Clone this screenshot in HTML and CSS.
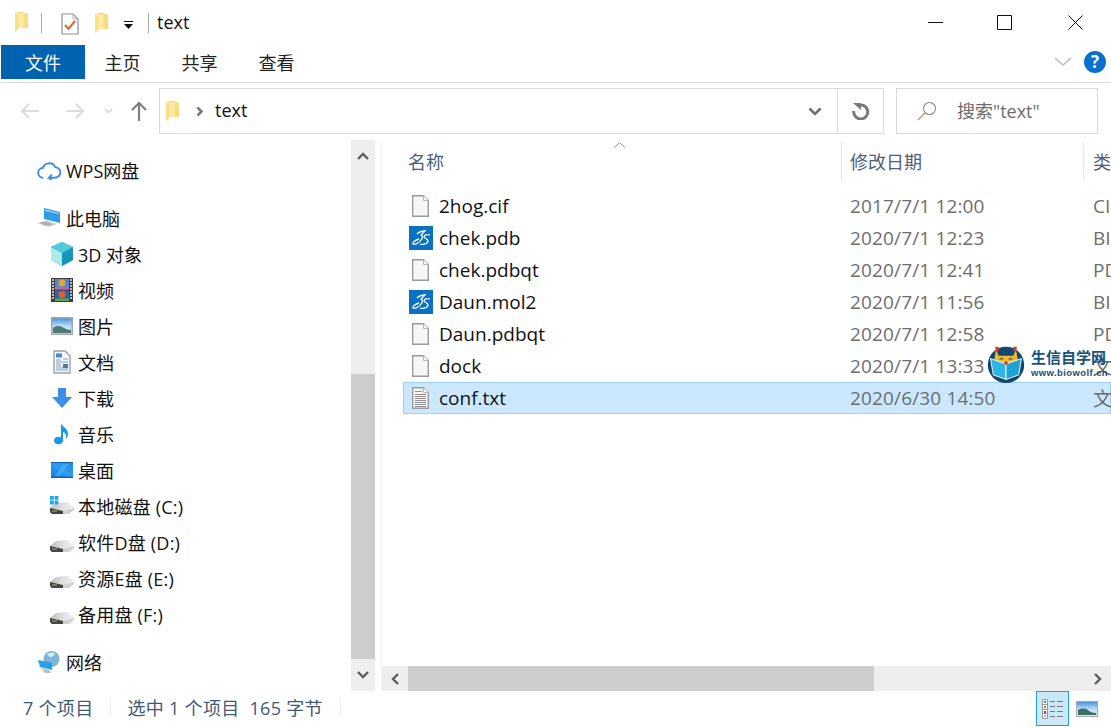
FILE: index.html
```html
<!DOCTYPE html>
<html lang="zh-CN">
<head>
<meta charset="utf-8">
<title>text</title>
<link rel="stylesheet" href="styles.css">
</head>
<body>
<svg class="defs" width="0" height="0" aria-hidden="true">
  <defs>
    <linearGradient id="fold" x1="0" x2="1" y1="0" y2="0"><stop offset="0" stop-color="#fbe08c"/><stop offset="1" stop-color="#f7d570"/></linearGradient>
    <linearGradient id="sky" x1="0" x2="0" y1="0" y2="1"><stop offset="0" stop-color="#3d8fe0"/><stop offset=".5" stop-color="#b9dcf5"/><stop offset="1" stop-color="#dfeefa"/></linearGradient>
    <linearGradient id="desk" x1="0" x2="1" y1="1" y2="0"><stop offset="0" stop-color="#1878dc"/><stop offset=".5" stop-color="#2f9cf2"/><stop offset="1" stop-color="#1b8aea"/></linearGradient>
    <linearGradient id="drivetop" x1="0" x2="1" y1="0" y2="0"><stop offset="0" stop-color="#bdbdbd"/><stop offset=".6" stop-color="#e3e3e3"/><stop offset="1" stop-color="#f0f0f0"/></linearGradient>
    <symbol id="folder" viewBox="0 0 15 22">
      <path d="M0 0h9l1 1h4v16H4L1 20 0 21z" fill="#fdeaa5"/>
      <path d="M3 0h6l1 1H3z" fill="#f5cf66"/>
      <path d="M9 1h4l1 16H9z" fill="url(#fold)"/>
      <path d="M4 3v14l-3 4-1 0V2z" fill="#fbe08c"/>
    </symbol>
    <symbol id="blank" viewBox="0 0 17 22">
      <path d="M.7.700h10.800l4.800 4.800v15.800H.7z" fill="#f6f7f8" stroke="#9b9b9b" stroke-width="1.400"/>
      <path d="M11.500.700v4.800h4.800" fill="#fff" stroke="#b5b5b5"/>
    </symbol>
    <symbol id="text" viewBox="0 0 17 22">
      <path d="M.7.700h10.800l4.800 4.800v15.800H.7z" fill="#f6f7f8" stroke="#9b9b9b" stroke-width="1.400"/>
      <path d="M11.500.700v4.800h4.800" fill="#fff" stroke="#b5b5b5"/>
      <path d="M3 4.500h7M3 7.500h11M3 9.500h11M3 11.500h11M3 13.500h11M3 15.500h11M3 17.500h11M3 19.500h11" stroke="#8f8f8f"/>
    </symbol>
    <symbol id="ds" viewBox="0 0 24 24">
      <rect width="24" height="24" fill="#0b71c1"/>
      <path d="M8 8c2-2 5-3 8-3l-4 4c2 1 2 3 0 5-2 3-6 5-8 4-1-1 2-4 6-5" fill="none" stroke="#fff" stroke-width="1.300"/>
      <path d="M21 9c-3-1-6 0-6 1.500 0 2 4 2 4 4.500 0 2.500-5 4-8 3" fill="none" stroke="#fff" stroke-width="1.300"/>
    </symbol>
    <symbol id="drive" viewBox="0 0 24 12">
      <path d="M0 6 6 1l11-1 7 5v3l-5 4H2L0 10z" fill="url(#drivetop)"/>
      <path d="M0 6l13 3v3H2l-2-2z" fill="#454545"/>
      <path d="M13 9l11-3v2l-5 4h-6z" fill="#d2d2d2"/>
      <path d="M2 9h5" stroke="#9ab88a"/>
    </symbol>
  </defs>
</svg>

<div class="window">
  <header class="titlebar">
    <svg class="tb-folder" width="14" height="21"><use href="#folder"/></svg>
    <span class="tb-sep tb-sep-a"></span>
    <svg class="tb-props" width="18" height="22" viewBox="0 0 18 22">
      <path d="M1 1h11l5 5v15H1z" fill="#fff" stroke="#8d8d8d" stroke-width="1.200"/>
      <path d="M12 1v5h5" fill="none" stroke="#b5b5b5"/>
      <path d="M4 12l3.500 4L14 8" fill="none" stroke="#e8602c" stroke-width="2"/>
    </svg>
    <svg class="tb-newfolder" width="14" height="21"><use href="#folder"/></svg>
    <svg class="tb-drop" width="9" height="9" viewBox="0 0 9 9"><path d="M0 .500h9" stroke="#111"/><path d="M0 3h9L4.500 8z" fill="#111"/></svg>
    <span class="tb-sep tb-sep-b"></span>
    <span class="tb-title">text</span>
    <div class="wincontrols">
      <svg width="15" height="15" viewBox="0 0 15 15"><path d="M0 7.500h15" stroke="#111"/></svg>
      <svg width="15" height="15" viewBox="0 0 15 15"><path d="M.500.500h14v14H.500z" fill="none" stroke="#111"/></svg>
      <svg class="wc-close" width="15" height="15" viewBox="0 0 15 15"><path d="M.500.500l14 14M14.500.500l-14 14" stroke="#111"/></svg>
    </div>
  </header>

  <nav class="ribbon">
    <span class="tab tab-file">文件</span>
    <span class="tab">主页</span>
    <span class="tab">共享</span>
    <span class="tab">查看</span>
    <div class="ribbon-right">
      <svg width="18" height="10" viewBox="0 0 18 10"><path d="M1 1l8 7 8-7" fill="none" stroke="#bcbcbc" stroke-width="1.500"/></svg>
      <span class="help">?</span>
    </div>
  </nav>

  <div class="addressrow">
    <div class="navbtns">
      <svg width="20" height="16" viewBox="0 0 20 16"><path d="M19 8H2M9 1 2 8l7 7" fill="none" stroke="#dcdcdc" stroke-width="2.200"/></svg>
      <svg width="20" height="16" viewBox="0 0 20 16"><path d="M1 8h17M11 1l7 7-7 7" fill="none" stroke="#dcdcdc" stroke-width="2.200"/></svg>
      <svg width="9" height="6" viewBox="0 0 9 6"><path d="M1 1l3.500 3.500L8 1" fill="none" stroke="#d5d5d5" stroke-width="1.500"/></svg>
      <svg width="16" height="20" viewBox="0 0 16 20"><path d="M8 20V2M1 9l7-7 7 7" fill="none" stroke="#7f7f7f" stroke-width="2.200"/></svg>
    </div>
    <div class="addressbar">
      <svg class="addr-folder" width="14" height="21"><use href="#folder"/></svg>
      <svg class="addr-chev" width="8" height="11" viewBox="0 0 8 11"><path d="M1.500 1.500 5.500 5.500 1.500 9.500" fill="none" stroke="#7a7a7a" stroke-width="2.600"/></svg>
      <span class="addr-text">text</span>
      <svg class="addr-drop" width="14" height="9" viewBox="0 0 14 9"><path d="M1.500 1.500 7 7l5.500-5.500" fill="none" stroke="#6f6f6f" stroke-width="2.600"/></svg>
      <span class="addr-refresh">
        <svg width="18" height="18" viewBox="0 0 18 18"><path d="M5 4a7 7 0 1 1-3.200 5" fill="none" stroke="#7a7a7a" stroke-width="3"/><path d="M1 1h8v7z" fill="#7a7a7a"/></svg>
      </span>
    </div>
    <div class="searchbox">
      <svg width="20" height="20" viewBox="0 0 20 20"><circle cx="12.500" cy="7.500" r="6" fill="none" stroke="#8a8a8a" stroke-width="1.100"/><path d="M8 12l-7 7" stroke="#c2906b" stroke-width="1.300"/></svg>
      <span class="search-label">搜索"text"</span>
    </div>
  </div>

  <main class="content">
    <aside class="sidebar">
      <ul class="tree">
        <li class="node top">
          <svg class="ic" width="25" height="20" viewBox="0 0 25 20"><path d="M6.500 18a5 5 0 0 1-.5-10 7 7 0 0 1 13-1 5.500 5.500 0 0 1-.5 11h-6l3-3M12.500 18l3 3" fill="none" stroke="#3f8cf0" stroke-width="2"/></svg>
          <span>WPS网盘</span>
        </li>
        <li class="node top gap">
          <svg class="ic" width="24" height="20" viewBox="0 0 24 20"><path d="M7 0l16 4v11L7 11z" fill="#2f9ce8"/><path d="M8 1.500l14 3.500v1L8 3z" fill="#a6d8f7"/><path d="M0 15l10-2 10 3-8 3z" fill="#c8ccd0"/><path d="M3 15l7-1.300M5 16l8-1.200M7 17l8-1" stroke="#8d9398" stroke-width=".7"/></svg>
          <span>此电脑</span>
        </li>
        <li class="node">
          <svg class="ic" width="24" height="24" viewBox="0 0 24 24"><path d="M12 0l11 5v13l-11 6-11-6V5z" fill="#22a6c7"/><path d="M1 5l11 6v13L1 18z" fill="#aeeaea"/><path d="M12 11l11-6v13l-11 6z" fill="#1796bc"/><path d="M12 0l11 5-11 6L1 5z" fill="#4fcbdc"/></svg>
          <span>3D 对象</span>
        </li>
        <li class="node">
          <svg class="ic" width="22" height="24" viewBox="0 0 22 24"><rect width="22" height="24" fill="#3c3c3c"/><rect x="4" y="1" width="14" height="10.500" fill="#4d87d8"/><rect x="4" y="12.500" width="14" height="10.500" fill="#2e63bb"/><circle cx="11" cy="5" r="3.500" fill="#e9a531"/><circle cx="11" cy="16.500" r="3.500" fill="#d9622b"/><rect x="4" y="9" width="14" height="2.500" fill="#cd5f9f"/><rect x="4" y="20.500" width="14" height="2.500" fill="#5ca53f"/><path d="M1 2h2M1 5h2M1 8h2M1 11h2M1 14h2M1 17h2M1 20h2M19 2h2M19 5h2M19 8h2M19 11h2M19 14h2M19 17h2M19 20h2" stroke="#e8e8e8" stroke-width="1.500"/></svg>
          <span>视频</span>
        </li>
        <li class="node">
          <svg class="ic" width="22" height="18" viewBox="0 0 22 18"><rect x=".75" y=".75" width="20.500" height="16.500" fill="url(#sky)" stroke="#a5a5a5" stroke-width="1.500"/><path d="M2 11c4-3 8-2 11 0 2 1 4 2 7 2v3H2z" fill="#4f7a78"/></svg>
          <span>图片</span>
        </li>
        <li class="node">
          <svg class="ic" width="18" height="24" viewBox="0 0 18 24"><path d="M1 1h11l5 5v17H1z" fill="#f7f8f9" stroke="#a0a0a0" stroke-width="1.400"/><path d="M3 3.500h6v4H3z" fill="#3e8fd8"/><path d="M10 9h5M3 10h5M3 12h12M3 14h5M3 16h5M3 18h12M3 20h12" stroke="#7ba6c9"/><path d="M10 14h5v4h-5z" fill="#4d7a95"/></svg>
          <span>文档</span>
        </li>
        <li class="node">
          <svg class="ic" width="20" height="20" viewBox="0 0 20 20"><path d="M6 0h8v9h6l-10 11L0 9h6z" fill="#3a8fe6"/></svg>
          <span>下载</span>
        </li>
        <li class="node">
          <svg class="ic" width="18" height="22" viewBox="0 0 18 22"><ellipse cx="5.500" cy="17.500" rx="4.500" ry="3.800" fill="#149ae8"/><path d="M8 18V0c1 4 7 5 7 11 0 2-1 4-2 5 .5-3 0-6-3-7v9z" fill="#149ae8"/></svg>
          <span>音乐</span>
        </li>
        <li class="node">
          <svg class="ic" width="22" height="16" viewBox="0 0 22 16"><rect width="22" height="16" fill="url(#desk)"/><path d="M0 0h22v1H0zM0 14.500h22V16H0z" fill="#0f62b5"/><path d="M4 14 12 2h6L9 14z" fill="#5cb6f5" opacity=".5"/></svg>
          <span>桌面</span>
        </li>
        <li class="node">
          <svg class="ic" width="24" height="20" viewBox="0 0 24 20"><use href="#drive" y="6" width="24" height="12"/><path d="M0 0h3.800v3.800H0zM4.600 0h3.800v3.800H4.600zM0 4.600h3.800v3.800H0zM4.600 4.600h3.800v3.800H4.600z" fill="#18a8ee"/></svg>
          <span class="wide">本地磁盘 (C:)</span>
        </li>
        <li class="node">
          <svg class="ic drive" width="24" height="12"><use href="#drive"/></svg>
          <span class="wide">软件D盘 (D:)</span>
        </li>
        <li class="node">
          <svg class="ic drive" width="24" height="12"><use href="#drive"/></svg>
          <span class="wide">资源E盘 (E:)</span>
        </li>
        <li class="node">
          <svg class="ic drive" width="24" height="12"><use href="#drive"/></svg>
          <span class="wide">备用盘 (F:)</span>
        </li>
        <li class="node top gap">
          <svg class="ic" width="22" height="22" viewBox="0 0 22 22"><circle cx="13.500" cy="8" r="8" fill="#7fb5d8"/><path d="M9 3c3-2 6-2 8 0-1 2-3 2-4 4-1-1-3-2-4-4z" fill="#d6e9f3"/><path d="M0 9l14 3v7L2 16z" fill="#26a0ea"/><path d="M3 17l8 2 2 3H7z" fill="#b8bfc5"/></svg>
          <span>网络</span>
        </li>
      </ul>
    </aside>

    <div class="vscroll">
      <span class="sb-btn"><svg width="12" height="8" viewBox="0 0 12 8"><path d="M1 7l5-5 5 5" fill="none" stroke="#5e5e5e" stroke-width="2.400"/></svg></span>
      <span class="vtrack"><span class="vthumb"></span></span>
      <span class="sb-btn"><svg width="12" height="8" viewBox="0 0 12 8"><path d="M1 1l5 5 5-5" fill="none" stroke="#5e5e5e" stroke-width="2.400"/></svg></span>
    </div>

    <section class="files">
      <div class="list">
        <div class="colhead">
          <svg class="sort" width="13" height="7" viewBox="0 0 13 7"><path d="M.500 6 6.500.700 12.500 6" fill="none" stroke="#9a9a9a"/></svg>
          <span class="c-name">名称</span>
          <span class="c-date">修改日期</span>
          <span class="c-type">类</span>
        </div>
        <div class="row">
          <span class="c-name"><svg class="fi" width="17" height="22"><use href="#blank"/></svg>2hog.cif</span>
          <span class="c-date">2017/7/1 12:00</span><span class="c-type">CI</span>
        </div>
        <div class="row">
          <span class="c-name"><svg class="fi ds" width="24" height="24"><use href="#ds"/></svg>chek.pdb</span>
          <span class="c-date">2020/7/1 12:23</span><span class="c-type">BI</span>
        </div>
        <div class="row">
          <span class="c-name"><svg class="fi" width="17" height="22"><use href="#blank"/></svg>chek.pdbqt</span>
          <span class="c-date">2020/7/1 12:41</span><span class="c-type">PD</span>
        </div>
        <div class="row">
          <span class="c-name"><svg class="fi ds" width="24" height="24"><use href="#ds"/></svg>Daun.mol2</span>
          <span class="c-date">2020/7/1 11:56</span><span class="c-type">BI</span>
        </div>
        <div class="row">
          <span class="c-name"><svg class="fi" width="17" height="22"><use href="#blank"/></svg>Daun.pdbqt</span>
          <span class="c-date">2020/7/1 12:58</span><span class="c-type">PD</span>
        </div>
        <div class="row">
          <span class="c-name"><svg class="fi" width="17" height="22"><use href="#blank"/></svg>dock</span>
          <span class="c-date">2020/7/1 13:33</span><span class="c-type">文</span>
        </div>
        <div class="row selected">
          <span class="c-name"><svg class="fi" width="17" height="22"><use href="#text"/></svg>conf.txt</span>
          <span class="c-date">2020/6/30 14:50</span><span class="c-type">文</span>
        </div>
      </div>
      <div class="hscroll">
        <span class="sb-btn-h"><svg width="8" height="12" viewBox="0 0 8 12"><path d="M7 1 2 6l5 5" fill="none" stroke="#5e5e5e" stroke-width="2.400"/></svg></span>
        <span class="hthumb"></span>
        <span class="htrack"></span>
        <span class="sb-btn-h"><svg width="8" height="12" viewBox="0 0 8 12"><path d="M1 1l5 5-5 5" fill="none" stroke="#5e5e5e" stroke-width="2.400"/></svg></span>
      </div>
    </section>

    <div class="watermark">
      <svg width="40" height="42" viewBox="0 0 44 44">
        <circle cx="22" cy="23" r="20" fill="#13466f"/>
        <path d="M11 6l3 7h16l3-7 2 12-5 7H14l-5-7z" fill="#f5b82a"/>
        <path d="M10 3h4v5h-3zM30 3h4l-1 5h-3z" fill="#d23a2e"/>
        <path d="M15 17q2-2 4 0M25 17q2-2 4 0" fill="none" stroke="#13466f" stroke-width="1.200"/>
        <path d="M5 16l17 6v17L8 34z" fill="#2eb6e6" stroke="#fff"/>
        <path d="M39 16l-17 6v17l14-5z" fill="#1ea3d6" stroke="#fff"/>
        <circle cx="22" cy="21" r="2" fill="#d23a2e"/>
      </svg>
      <span class="wm-text">
        <span class="wm-cn">生信自学网</span>
        <span class="wm-url">www.biowolf.cn</span>
      </span>
    </div>
  </main>

  <footer class="statusbar">
    <span class="st-a">7 个项目</span>
    <span class="st-sep"></span>
    <span class="st-b">选中 1 个项目&nbsp;&nbsp;165 字节</span>
    <span class="st-sep"></span>
    <div class="views">
      <span class="view active">
        <svg width="22" height="20" viewBox="0 0 22 20">
          <path d="M.5.500h5v19h-5z" fill="#fff" stroke="#9a9a9a"/>
          <path d="M1 5.500h4M1 10.500h4M1 14.500h4" stroke="#9a9a9a"/>
          <rect x="2" y="2" width="2" height="2" fill="#4b8fb0"/><rect x="2" y="7" width="2" height="2" fill="#8a8a30"/><rect x="2" y="12" width="2" height="2" fill="#c03a20"/><rect x="2" y="16" width="2" height="2" fill="#8fb6d0"/>
          <path d="M8 2.500h5M15 2.500h6M8 7.500h5M15 7.500h6M8 12.500h5M15 12.500h6M8 17.500h5M15 17.500h6" stroke="#7d7d7d"/>
        </svg>
      </span>
      <span class="view">
        <svg width="22" height="16" viewBox="0 0 22 16"><rect x=".5" y=".5" width="21" height="15" fill="url(#sky)" stroke="#a8a8a8"/><path d="M2 9c4-2 8-2 11 1 2 1 4 2 7 2v2H2z" fill="#3f6f66"/></svg>
      </span>
    </div>
  </footer>
</div>
</body>
</html>
```
FILE: styles.css
```css
* { box-sizing: border-box; }
html, body { margin: 0; padding: 0; }
body {
  width: 1111px;
  height: 727px;
  overflow: hidden;
  background: #fff;
  color: #111;
  font-family: "Open Sans", "Noto Sans CJK SC", sans-serif;
  font-size: 18px;
}
.defs { position: absolute; }
.window { display: flex; flex-direction: column; width: 1111px; height: 727px; overflow: hidden; position: relative; }

.titlebar { height: 45px; display: flex; align-items: center; flex: none; }
.tb-folder { margin-left: 15px; margin-top: -1px; }
.tb-sep { width: 1px; height: 20px; background: #a8a8a8; }
.tb-sep-a { margin-left: 12px; }
.tb-props { margin-left: 19px; margin-top: 2px; }
.tb-newfolder { margin-left: 16px; margin-top: 2px; }
.tb-drop { margin-left: 15px; margin-top: 5px; }
.tb-sep-b { margin-left: 15px; }
.tb-title { margin-left: 8px; font-size: 18px; line-height: 24px; margin-top: -2px; }
.wincontrols { margin-left: auto; margin-right: 28px; display: flex; gap: 54px; }
.wc-close { margin-left: 2px; }

.ribbon { height: 38px; flex: none; display: flex; align-items: flex-start; border-bottom: 1px solid #dadada; margin-left: 1px; }
.tab { width: 77px; height: 34px; display: flex; align-items: center; justify-content: center; font-size: 18px; color: #222; }
.tab-file { width: 84px; background: #0063b1; color: #fff; margin-right: -1px; }
.ribbon-right { margin-left: auto; margin-right: 5px; display: flex; align-items: center; gap: 12px; height: 34px; }
.help { width: 22px; height: 22px; border-radius: 50%; background: #0a70cf; color: #fff; font: bold 17px/22px "Open Sans", sans-serif; text-align: center; }

.addressrow { height: 46px; margin-top: 5px; flex: none; display: flex; align-items: stretch; }
.navbtns { width: 159px; display: flex; align-items: center; padding-left: 20px; }
.navbtns svg:nth-child(2) { margin-left: 25px; }
.navbtns svg:nth-child(3) { margin-left: 19px; }
.navbtns svg:nth-child(4) { margin-left: 18px; }
.addressbar { width: 725px; border: 1px solid #d9d9d9; display: flex; align-items: center; padding-left: 6px; }
.addr-chev { margin-left: 16px; }
.addr-text { margin-left: 11px; font-size: 18px; padding-bottom: 2px; }
.addr-drop { margin-left: auto; margin-right: 15px; }
.addr-refresh { width: 46px; height: 100%; border-left: 1px solid #d9d9d9; display: flex; align-items: center; justify-content: center; }
.searchbox { width: 202px; margin-left: 12px; border: 1px solid #d9d9d9; display: flex; align-items: center; padding-left: 20px; gap: 20px; color: #6d6d6d; font-size: 18px; }
.search-label { padding-bottom: 2px; }

.content { flex: 1; min-height: 0; display: flex; margin-top: 6px; position: relative; }
.sidebar { width: 351px; flex: none; padding-top: 12px; }
.tree { list-style: none; margin: 0; padding: 0; }
.node { height: 36px; display: flex; align-items: center; padding-left: 50px; font-size: 18px; white-space: nowrap; color: #111; }
.node .ic { width: 24px; flex: none; margin-right: 4px; }
.node.top { padding-left: 37px; }
.node.top .ic { margin-right: 5px; }
.node.gap { margin-top: 12px; }
.node .drive { margin-top: 8px; }
.wide { letter-spacing: .22px; }

.vscroll { width: 24px; flex: none; background: #eee; display: flex; flex-direction: column; }
.sb-btn { height: 32px; flex: none; display: flex; align-items: center; justify-content: center; }
.vtrack { flex: 1; display: flex; flex-direction: column; justify-content: flex-end; }
.vthumb { height: 285px; background: #cdcdcd; }

.files { flex: 1; min-width: 0; margin-left: 6px; border-left: 1px solid #f3f3f3; display: flex; flex-direction: column; }
.list { flex: 1; min-height: 0; padding-left: 21px; overflow: hidden; }
.colhead { height: 44px; display: flex; align-items: center; position: relative; color: #4c607a; margin-bottom: 6px; font-size: 18px; padding-bottom: 2px; }
.sort { position: absolute; left: 210px; top: 2px; }
.c-name { width: 438px; flex: none; display: flex; align-items: center; white-space: nowrap; }
.c-date { width: 243px; flex: none; white-space: nowrap; color: #6d6d6d; }
.c-type { flex: none; white-space: nowrap; color: #6d6d6d; }
.colhead .c-name { padding-left: 5px; color: #4c607a; }
.colhead .c-date { color: #4c607a; border-left: 1px solid #e5e5e5; padding-left: 8px; height: 38px; display: flex; align-items: center; width: 242px; }
.colhead .c-type { border-left: 1px solid #e5e5e5; padding-left: 9px; height: 38px; display: flex; align-items: center; color: #4c607a; }
.row { height: 32px; display: flex; align-items: center; color: #111; font-size: 19px; }
.row .c-name { padding-left: 6px; width: 447px; }
.row .c-date { letter-spacing: .15px; }
.row .fi { margin-left: 3px; margin-right: 10px; flex: none; }
.row .fi.ds { margin-left: 0; margin-right: 6px; }
.row .c-type { color: #6d6d6d; }
.selected { background: #cce8ff; box-shadow: inset 0 0 0 1px #99d1ff; }

.hscroll { height: 25px; flex: none; background: #eee; display: flex; }
.sb-btn-h { width: 26px; flex: none; display: flex; align-items: center; justify-content: center; }
.hthumb { width: 466px; background: #cdcdcd; flex: none; }
.htrack { flex: 1; }

.watermark { position: absolute; left: 986px; top: 203px; display: flex; align-items: center; }
.wm-text { display: flex; flex-direction: column; margin-left: 5px; color: #14527f; font-weight: 700; line-height: 1; }
.wm-cn { font-size: 15px; }
.wm-url { font: 700 9.500px/11px "Liberation Sans", sans-serif; letter-spacing: .4px; margin-top: 2px; }

.statusbar { height: 36px; flex: none; display: flex; align-items: center; color: #3f5a75; font-size: 18px; letter-spacing: .3px; white-space: nowrap; padding-bottom: 4px; }
.st-a { margin-left: 23px; }
.st-sep { width: 1px; height: 18px; background: #eee; margin-left: 17px; }
.st-b { margin-left: 16px; }
.views { margin-left: auto; margin-right: 8px; display: flex; align-items: center; gap: 1px; align-self: flex-start; }
.view { width: 33px; height: 35px; display: flex; align-items: center; justify-content: center; }
.view.active { background: #cbe8f6; border: 1px solid #26a0da; }
```
